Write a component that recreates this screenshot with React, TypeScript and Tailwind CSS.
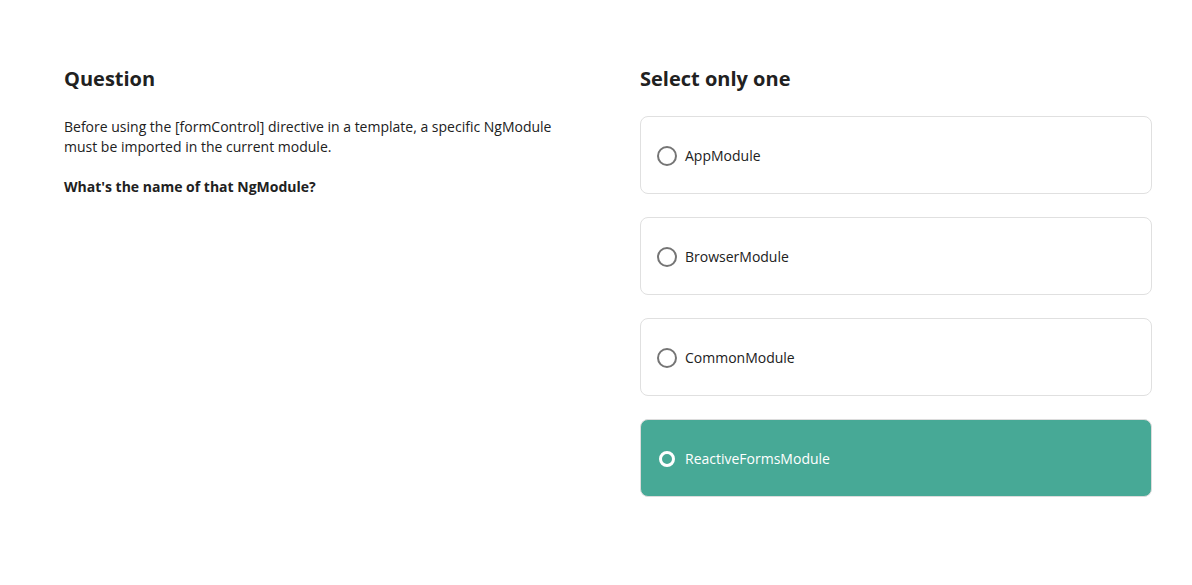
const options = ['AppModule', 'BrowserModule', 'CommonModule', 'ReactiveFormsModule'];

export default function App() {
  const selected = 'ReactiveFormsModule';
  return (
    <div
      className="min-h-[585px] w-full bg-white text-[#212121]"
      style={{ fontFamily: '"Open Sans", "Liberation Sans", sans-serif' }}
    >
      <div className="flex gap-16 pl-16 pr-10 pt-[65px]">
        <div className="w-[512px] shrink-0">
          <h2 className="text-[20px] leading-7 font-bold mb-6">Question</h2>
          <p className="text-sm leading-5 mb-5">
            Before using the [formControl] directive in a template, a specific NgModule must be imported in the current module.
          </p>
          <p className="text-sm leading-5 font-bold">What's the name of that NgModule?</p>
        </div>

        <div className="flex-1">
          <h2 className="text-[20px] leading-7 font-bold mb-[23px]">Select only one</h2>
          <div className="flex flex-col gap-[23px]">
            {options.map((opt) => {
              const active = opt === selected;
              return (
                <div
                  key={opt}
                  className={
                    active
                      ? 'h-[78px] flex items-center gap-2 px-4 pt-0.5 rounded-lg border border-[#dcdcdc] bg-[#47a996] text-white'
                      : 'h-[78px] flex items-center gap-2 px-4 pt-0.5 rounded-lg border border-[#e0e0e0] bg-white'
                  }
                >
                  <span
                    className={
                      active
                        ? 'w-5 h-5 flex items-center justify-center'
                        : 'w-5 h-5 rounded-full border-2 border-[#757575]'
                    }
                  >
                    {active && <span className="w-4 h-4 rounded-full border-[3px] border-white" />}
                  </span>
                  <span className="text-sm">{opt}</span>
                </div>
              );
            })}
          </div>
        </div>
      </div>
    </div>
  );
}
